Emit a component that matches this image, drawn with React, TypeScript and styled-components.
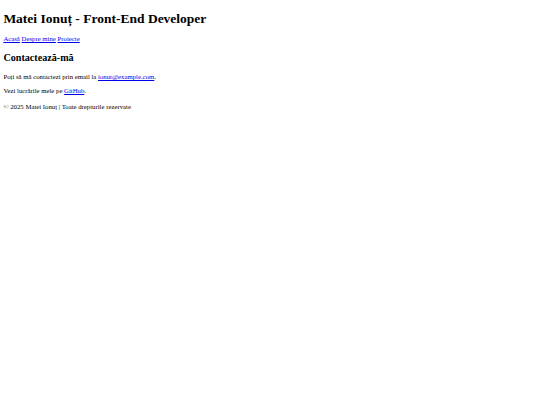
import styled, { createGlobalStyle } from 'styled-components'

// the reference is a 1280px-wide page shrunk to 540px
const k = 540 / 1280
const s = (n: number) => `${(n * k).toFixed(2)}px`

const GlobalStyle = createGlobalStyle`
  html, body {
    background: #fff;
  }
  body {
    margin: ${s(8)};
    font-family: "Liberation Serif", "Times New Roman", serif;
    font-size: ${s(16)};
    color: #000;
  }
`

const Header = styled.header``

const Title = styled.h1`
  font-size: ${s(32)};
  font-weight: bold;
  margin: ${s(19)} 0 ${s(18)};
`

const Nav = styled.nav`
  display: flex;
  gap: ${s(4)};
`

const NavLink = styled.a`
  color: #0000ee;
  text-decoration: underline;
`

const Section = styled.section``

const Heading = styled.h2`
  font-size: ${s(24)};
  font-weight: bold;
  margin: ${s(24)} 0 ${s(24)};
`

const Text = styled.p`
  margin: ${s(16)} 0;
`

const Link = styled.a`
  color: #0000ee;
  text-decoration: underline;
`

const Footer = styled.footer`
  margin-top: ${s(22)};
`

export default function App() {
  return (
    <>
      <GlobalStyle />
      <Header>
        <Title>Matei Ionuț - Front-End Developer</Title>
        <Nav>
          <NavLink href="#">Acasă</NavLink>
          <NavLink href="#">Despre mine</NavLink>
          <NavLink href="#">Proiecte</NavLink>
        </Nav>
      </Header>
      <Section>
        <Heading>Contactează-mă</Heading>
        <Text>
          Poți să mă contactezi prin email la <Link href="#">ionut@example.com</Link>.
        </Text>
        <Text>
          Vezi lucrările mele pe <Link href="#">GitHub</Link>.
        </Text>
      </Section>
      <Footer>
        <Text>© 2025 Matei Ionuț | Toate drepturile rezervate</Text>
      </Footer>
    </>
  )
}
